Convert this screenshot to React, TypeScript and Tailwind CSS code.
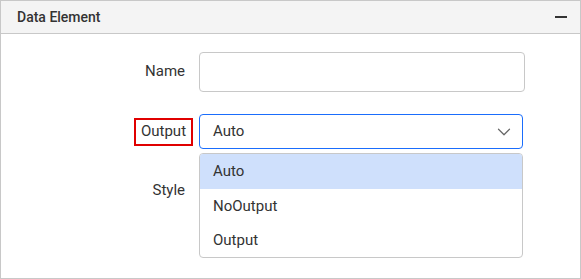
import { ChevronDown } from "lucide-react"

export default function App() {
  const options = ["Auto", "NoOutput", "Output"]

  return (
    <div className="w-[581px] h-[279px] bg-white border border-[#c8c8c8] font-['Roboto',sans-serif] text-[#333] text-[15px] overflow-hidden">
      {/* Header */}
      <div className="h-[33px] bg-[#f4f4f4] border-b border-[#c8c8c8] flex items-center justify-between pl-4 pr-[13px]">
        <span className="text-[14px] font-medium text-[#333]">Data Element</span>
        <span className="block w-[12px] h-[2px] bg-[#333]" />
      </div>

      {/* Body */}
      <div className="pt-[18px]">
        <div className="flex items-center h-[40px]">
          <div className="w-[184px] text-right -mt-[2px]">Name</div>
          <input className="ml-[14px] w-[326px] h-[40px] border border-[#c8c8c8] rounded-[4px] outline-none px-3" />
        </div>

        <div className="flex items-center mt-[22px] h-[35px]">
          <div className="w-[192px] flex justify-end">
            <span className="border-2 border-[#e00000] h-[28px] w-[59px] flex items-center justify-center">
              Output
            </span>
          </div>
          <div className="relative ml-[6px]">
            <div className="w-[324px] h-[35px] border border-[#1a6dfc] rounded-[4px] flex items-center justify-between pl-[13px] pr-[7px]">
              <span>Auto</span>
              <ChevronDown className="w-[22px] h-[22px] text-[#666]" strokeWidth={1.3} />
            </div>
            <div className="absolute left-0 top-[39px] w-[324px] border border-[#c8c8c8] rounded-[4px] bg-white z-10 overflow-hidden">
              {options.map((o, i) => (
                <div
                  key={o}
                  className={
                    i === 0
                      ? "h-[35px] flex items-center pl-[13px] bg-[#cfe0fc]"
                      : "h-[34px] flex items-center pl-[13px]"
                  }
                >
                  {o}
                </div>
              ))}
            </div>
          </div>
        </div>

        <div className="flex items-center mt-[24px] h-[35px]">
          <div className="w-[184px] text-right">Style</div>
        </div>
      </div>
    </div>
  )
}
